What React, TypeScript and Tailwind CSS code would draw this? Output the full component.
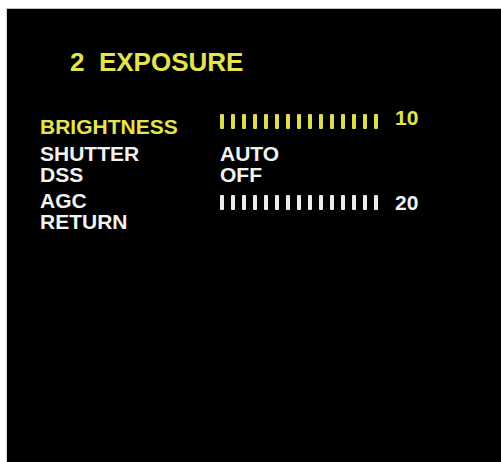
const YELLOW = "text-[#e4e44e]";
const WHITE = "text-[#f2f2f2]";

type Row = {
  label: string;
  active?: boolean;
  height: string;
  value?: string;
  level?: number;
};

const rows: Row[] = [
  { label: "BRIGHTNESS", active: true, height: "h-[27px]", level: 10 },
  { label: "SHUTTER", height: "h-[21px]", value: "AUTO" },
  { label: "DSS", height: "h-[26px]", value: "OFF" },
  { label: "AGC", height: "h-[21px]", level: 20 },
  { label: "RETURN", height: "h-[21px]" },
];

// Tick gauge: 15 fixed ticks followed by the numeric level
function Gauge({ level, active }: { level: number; active?: boolean }) {
  const tick = active ? "bg-[#dede4c]" : "bg-[#ececec]";
  return (
    <div className="flex items-start">
      <div className={`flex gap-[7px] ${active ? "-mt-[2px]" : "mt-[5px]"}`}>
        {Array.from({ length: 15 }).map((_, i) => (
          <span key={i} className={`block w-[4px] h-[15px] rounded-[1px] ${tick}`} />
        ))}
      </div>
      <span
        className={`ml-[17px] ${active ? `${YELLOW} -mt-[9px]` : `${WHITE} mt-[2px]`}`}
      >
        {level}
      </span>
    </div>
  );
}

export default function App() {
  return (
    <div className="w-[501px] h-[462px] bg-white flex overflow-hidden">
      <div
        className="mt-[8px] ml-[6px] flex-1 bg-black border-t border-l border-t-[#bdbdbd] border-l-[#d6d6d6] pl-[33px] pt-[40px]"
        style={{ fontFamily: '"Liberation Sans", Arial, sans-serif' }}
      >
        <h1
          className={`ml-[30px] text-[26px] leading-[26px] font-bold whitespace-pre ${YELLOW}`}
        >
          {"2  EXPOSURE"}
        </h1>

        <div className="mt-[41px] text-[21px] leading-[21px] font-bold">
          {rows.map((row) => (
            <div key={row.label} className={`flex ${row.height}`}>
              <span className={`w-[180px] ${row.active ? YELLOW : WHITE}`}>
                {row.label}
              </span>
              {row.value && <span className={WHITE}>{row.value}</span>}
              {row.level !== undefined && (
                <Gauge level={row.level} active={row.active} />
              )}
            </div>
          ))}
        </div>
      </div>
    </div>
  );
}
